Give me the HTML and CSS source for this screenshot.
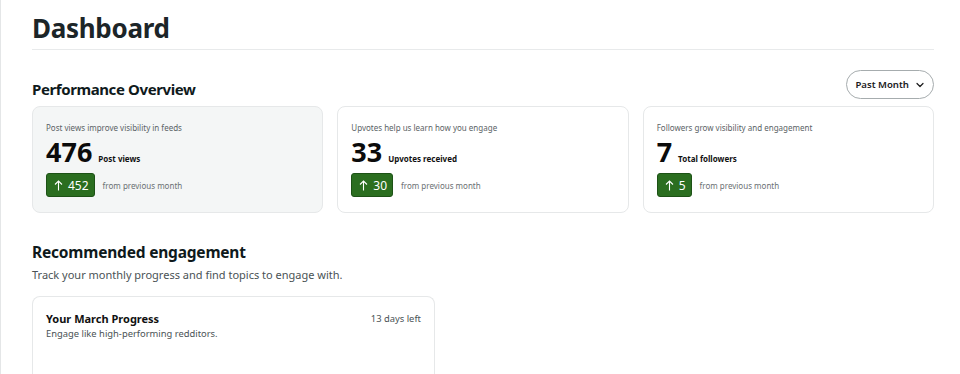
FILE: index.html
```html
<!DOCTYPE html>
<html>
  <head>
    <title>Dashboard</title>
    <link rel="stylesheet" href="styles.css">
  </head>
  <body>
    <main class="page">
      <h1 class="page-title">Dashboard</h1>

      <section class="overview">
        <div class="section-head">
          <h2 class="overview-title">Performance Overview</h2>
          <button class="period-btn">
            Past Month
            <svg width="10" height="10" viewBox="0 0 10 10"><path d="M2 3.5 L5 6.5 L8 3.5" fill="none" stroke="#1a1a1b" stroke-width="1.2" stroke-linecap="round" stroke-linejoin="round"/></svg>
          </button>
        </div>

        <div class="stats">
          <div class="stat-card active">
            <div class="stat-caption">Post views improve visibility in feeds</div>
            <div class="stat-main">
              <span class="stat-value">476</span>
              <span class="stat-label">Post views</span>
            </div>
            <div class="stat-change">
              <span class="badge"><svg class="arrow" width="9" height="11" viewBox="0 0 9 11"><path d="M4.5 10.5 V1 M1 4.5 L4.5 1 L8 4.5" fill="none" stroke="#fff" stroke-width="1.1"/></svg>452</span>
              <span class="change-text">from previous month</span>
            </div>
          </div>
          <div class="stat-card">
            <div class="stat-caption">Upvotes help us learn how you engage</div>
            <div class="stat-main">
              <span class="stat-value">33</span>
              <span class="stat-label">Upvotes received</span>
            </div>
            <div class="stat-change">
              <span class="badge"><svg class="arrow" width="9" height="11" viewBox="0 0 9 11"><path d="M4.5 10.5 V1 M1 4.5 L4.5 1 L8 4.5" fill="none" stroke="#fff" stroke-width="1.1"/></svg>30</span>
              <span class="change-text">from previous month</span>
            </div>
          </div>
          <div class="stat-card">
            <div class="stat-caption">Followers grow visibility and engagement</div>
            <div class="stat-main">
              <span class="stat-value">7</span>
              <span class="stat-label">Total followers</span>
            </div>
            <div class="stat-change">
              <span class="badge"><svg class="arrow" width="9" height="11" viewBox="0 0 9 11"><path d="M4.5 10.5 V1 M1 4.5 L4.5 1 L8 4.5" fill="none" stroke="#fff" stroke-width="1.1"/></svg>5</span>
              <span class="change-text">from previous month</span>
            </div>
          </div>
        </div>
      </section>

      <section class="engagement">
        <h2 class="engagement-title">Recommended engagement</h2>
        <p class="section-sub">Track your monthly progress and find topics to engage with.</p>
        <div class="progress-card">
          <div class="progress-head">
            <div>
              <h3>Your March Progress</h3>
              <p>Engage like high-performing redditors.</p>
            </div>
            <span class="days-left">13 days left</span>
          </div>
        </div>
      </section>
    </main>
  </body>
</html>
```

FILE: styles.css
```css
body {
  margin: 0;
  font-family: "Noto Sans", "Open Sans", sans-serif;
  color: #1a1a1b;
  background-color: #fff;
  border-left: 1px solid #e4e6e7;
  min-height: 374px;
  box-sizing: border-box;
}

.page {
  padding: 8px 26px 0 31px;
}

.page-title {
  margin: 0;
  font-size: 26px;
  letter-spacing: -0.3px;
  font-weight: 700;
  color: #1c2528;
  line-height: 41px;
  padding-bottom: 0;
  border-bottom: 1px solid #e8eaeb;
}

.section-head {
  display: flex;
  justify-content: space-between;
  align-items: flex-end;
  margin-top: 21px;
}

h2 {
  margin: 0;
  font-weight: 700;
  line-height: 22px;
  color: #0f1a1c;
}

.overview-title {
  font-size: 15px;
  letter-spacing: -0.4px;
}

.period-btn {
  display: flex;
  align-items: center;
  gap: 6px;
  height: 29px;
  padding: 0 8px 0 8px;
  border: 1px solid #a6acae;
  border-radius: 15px;
  background-color: #fff;
  font-family: inherit;
  font-size: 9.6px;
  font-weight: 600;
  color: #1a1a1b;
  position: relative;
  top: -1px;
}

.stats {
  display: flex;
  gap: 14px;
  margin-top: 6px;
}

.stat-card {
  flex: 1;
  height: 107px;
  box-sizing: border-box;
  border: 1px solid #e6e8e9;
  border-radius: 8px;
  padding: 15px 13px 0 13px;
}

.stat-card.active {
  background-color: #f4f6f6;
}

.stat-caption {
  font-size: 8px;
  color: #5b6366;
  line-height: 12px;
}

.stat-main {
  display: flex;
  align-items: baseline;
  gap: 6px;
  margin-top: 1px;
}

.stat-value {
  font-size: 27px;
  font-weight: 700;
  color: #0b0b0b;
  line-height: 34px;
}

.stat-label {
  font-size: 8px;
  font-weight: 700;
  color: #111;
}

.stat-change {
  display: flex;
  align-items: center;
  gap: 8px;
  margin-top: 4px;
}

.badge {
  display: inline-flex;
  align-items: center;
  gap: 5px;
  height: 24px;
  box-sizing: border-box;
  padding: 0 5px 0 7px;
  border: 1px solid #1d5216;
  border-radius: 3px;
  background-color: #2b6e20;
  color: #fff;
  font-size: 12px;
}

.change-text {
  font-size: 8px;
  color: #6a7073;
}

.engagement {
  margin-top: 28px;
}

.engagement-title {
  font-size: 15.5px;
  letter-spacing: -0.2px;
}

.section-sub {
  margin: 3px 0 0 0;
  font-size: 11px;
  color: #4a5255;
  line-height: 18px;
}

.progress-card {
  width: 403px;
  height: 90px;
  box-sizing: border-box;
  margin-top: 12px;
  border: 1px solid #e6e8e9;
  border-bottom: none;
  border-radius: 8px 8px 0 0;
  padding: 14px 13px;
}

.progress-head {
  display: flex;
  justify-content: space-between;
  align-items: flex-start;
}

.progress-head h3 {
  margin: 0;
  font-size: 11px;
  font-weight: 700;
  line-height: 16px;
  color: #111;
}

.progress-head p {
  margin: 0;
  font-size: 9.4px;
  color: #4a5255;
  line-height: 14px;
}

.days-left {
  font-size: 9.4px;
  color: #4a5255;
  line-height: 16px;
}
```
